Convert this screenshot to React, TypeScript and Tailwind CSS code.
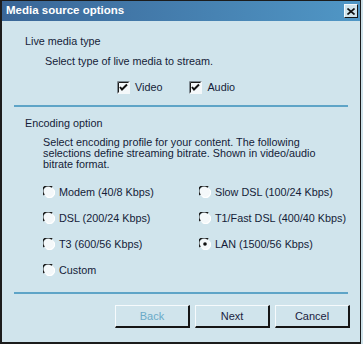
import React from 'react';

const font = { fontFamily: '"Liberation Sans", Arial, sans-serif' };

function CheckBox({ label }: { label: string }) {
  return (
    <div className="flex items-center h-[14px]">
      <svg width="13" height="13" viewBox="0 0 13 13" className="shrink-0">
        <rect x="0" y="0" width="13" height="13" fill="#f4f8fa" />
        <path d="M0.5 12.5V0.5H12.5" stroke="#7d8a92" fill="none" />
        <path d="M1.5 11.5V1.5H11.5" stroke="#1c1c1c" fill="none" />
        <path d="M3 6 L5 8.5 L10 3.5" stroke="#111" strokeWidth="2" fill="none" />
      </svg>
      <span className="ml-[5px]">{label}</span>
    </div>
  );
}

function Radio({ label, checked = false }: { label: string; checked?: boolean }) {
  return (
    <div className="flex items-center h-[14px]">
      <svg width="12" height="12" viewBox="0 0 12 12" className="shrink-0">
        <circle cx="6" cy="6" r="5.5" fill="#f4f8fa" />
        <path d="M1.2 9 A5 5 0 0 1 9 1.2" stroke="#1c1c1c" strokeWidth="1.6" fill="none" />
        <path d="M10.5 3.5 A5 5 0 0 1 3.5 10.5" stroke="#ffffff" strokeWidth="1.2" fill="none" />
        {checked && <circle cx="6" cy="6" r="1.8" fill="#111" />}
      </svg>
      <span className="ml-[4px]">{label}</span>
    </div>
  );
}

function Button({ label, disabled = false }: { label: string; disabled?: boolean }) {
  return (
    <button
      className={
        'w-[75px] h-[23px] border-t border-l border-b-2 border-r-2 border-t-[#f6fafc] border-l-[#f6fafc] border-b-[#151515] border-r-[#151515] bg-[#d0e4ec] text-[11px] ' +
        (disabled ? 'text-[#6aaac8]' : 'text-[#1a2240]')
      }
    >
      {label}
    </button>
  );
}

export default function App() {
  return (
    <div className="w-[363px] h-[344px] bg-[#d0e4ec]" style={font}>
      <div className="w-[361px] h-[344px] border-l-2 border-r border-b-2 border-t border-[#1c1c1c] flex flex-col text-[10.8px] text-[#141c38]">
        {/* Title bar */}
        <div className="h-[20px] flex items-center justify-between pl-[4px] pr-[2px] bg-gradient-to-r from-[#3a6697] to-[#5097c6]">
          <span className="text-white font-bold text-[11.5px]">Media source options</span>
          <div className="w-[14px] h-[14px] bg-[#d0e4ec] border-t border-l border-b border-r border-t-[#f6fafc] border-l-[#f6fafc] border-b-[#151515] border-r-[#151515] flex items-center justify-center">
            <svg width="8" height="7" viewBox="0 0 8 7">
              <path d="M0.5 0.5 L7.5 6.5 M7.5 0.5 L0.5 6.5" stroke="#111" strokeWidth="1.6" />
            </svg>
          </div>
        </div>

        {/* Live media type */}
        <div className="mt-[13px] ml-[23px] h-[14px] leading-[14px]">Live media type</div>
        <div className="mt-[6px] ml-[43px] h-[14px] leading-[14px]">Select type of live media to stream.</div>
        <div className="mt-[12px] ml-[115px] flex gap-[27px]">
          <CheckBox label="Video" />
          <CheckBox label="Audio" />
        </div>

        <div className="mt-[11px] mx-[12px] h-[2px] bg-[#5ea4c7]" />

        {/* Encoding option */}
        <div className="mt-[9px] ml-[23px] h-[14px] leading-[14px]">Encoding option</div>
        <p className="mt-[7px] ml-[41px] mr-[18px] leading-[11px]">
          Select encoding profile for your content. The following selections define streaming bitrate. Shown in video/audio bitrate format.
        </p>

        <div className="mt-[15px] ml-[41px] grid grid-cols-[156px_1fr] gap-y-[12px]">
          <Radio label="Modem (40/8 Kbps)" />
          <Radio label="Slow DSL (100/24 Kbps)" />
          <Radio label="DSL (200/24 Kbps)" />
          <Radio label="T1/Fast DSL (400/40 Kbps)" />
          <Radio label="T3 (600/56 Kbps)" />
          <Radio label="LAN (1500/56 Kbps)" checked />
          <Radio label="Custom" />
        </div>

        <div className="mt-[15px] mx-[12px] h-[2px] bg-[#5ea4c7]" />

        <div className="mt-[11px] flex justify-end gap-[5px] mr-[10px]">
          <Button label="Back" disabled />
          <Button label="Next" />
          <Button label="Cancel" />
        </div>
      </div>
    </div>
  );
}
